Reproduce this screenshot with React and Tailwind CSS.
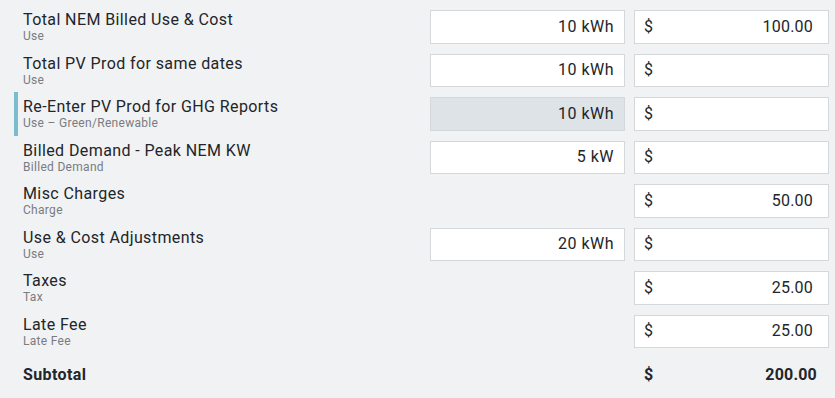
const rows = [
  { title: "Total NEM Billed Use & Cost", sub: "Use", qty: "10 kWh", cost: "100.00" },
  { title: "Total PV Prod for same dates", sub: "Use", qty: "10 kWh", cost: "" },
  { title: "Re-Enter PV Prod for GHG Reports", sub: "Use – Green/Renewable", qty: "10 kWh", cost: "", locked: true },
  { title: "Billed Demand - Peak NEM KW", sub: "Billed Demand", qty: "5 kW", cost: "" },
  { title: "Misc Charges", sub: "Charge", qty: null, cost: "50.00" },
  { title: "Use & Cost Adjustments", sub: "Use", qty: "20 kWh", cost: "" },
  { title: "Taxes", sub: "Tax", qty: null, cost: "25.00" },
  { title: "Late Fee", sub: "Late Fee", qty: null, cost: "25.00" },
];

function Row({ row }) {
  return (
    <div className="flex h-[43.5px] items-stretch">
      <div className={`w-[4px] shrink-0 ${row.locked ? "bg-[#7bbdcf]" : ""}`} />
      <div className="flex flex-1 flex-col justify-center pl-[5px]">
        <div className="text-[16px] leading-[19px] tracking-[0.4px] text-[#222529]">{row.title}</div>
        <div className="text-[12px] leading-[14px] tracking-[0.3px] text-[#7a7c7f]">{row.sub}</div>
      </div>
      <div className="flex items-center gap-[9px]">
        {row.qty ? (
          <div
            className={`flex h-[33.5px] w-[195px] items-center justify-end border border-[#d5d8db] pr-[10px] text-[16px] tracking-[0.5px] text-[#222529] ${
              row.locked ? "bg-[#dde3e7]" : "bg-white"
            }`}
          >
            {row.qty}
          </div>
        ) : (
          <div className="w-[195px]" />
        )}
        <div className="flex h-[33.5px] w-[195px] items-center justify-between border border-[#d5d8db] bg-white pl-[9px] pr-[15px] text-[16px] tracking-[0.2px] text-[#222529]">
          <span>$</span>
          <span>{row.cost}</span>
        </div>
      </div>
    </div>
  );
}

export default function App() {
  return (
    <div className="min-h-[398px] bg-[#f1f2f4] pt-[5px] pl-[14px] pr-[6px] font-['Roboto',sans-serif]">
      {rows.map((r) => (
        <Row key={r.title} row={r} />
      ))}
      <div className="flex h-[43.5px] items-center">
        <div className="flex-1 pl-[9px] text-[16px] font-bold tracking-[0.4px] text-[#222529]">Subtotal</div>
        <div className="flex w-[195px] justify-between pl-[10px] pr-[12px] text-[16px] font-bold tracking-[0.2px] text-[#222529]">
          <span>$</span>
          <span>200.00</span>
        </div>
      </div>
    </div>
  );
}
